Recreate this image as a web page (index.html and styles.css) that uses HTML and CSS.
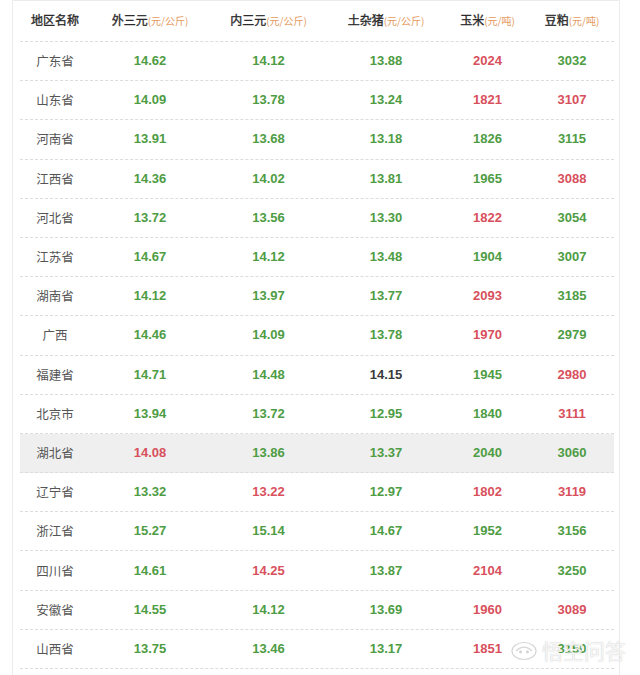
FILE: index.html
```html
<!DOCTYPE html>
<html lang="zh">
<head>
<meta charset="utf-8">
<title>生猪价格</title>
<link rel="stylesheet" href="styles.css">
</head>
<body>
<div class="frame">
  <div class="table">
    <div class="row head">
      <div class="cell">地区名称</div>
      <div class="cell">外三元<span class="unit">(元/公斤)</span></div>
      <div class="cell">内三元<span class="unit">(元/公斤)</span></div>
      <div class="cell">土杂猪<span class="unit">(元/公斤)</span></div>
      <div class="cell">玉米<span class="unit">(元/吨)</span></div>
      <div class="cell">豆粕<span class="unit">(元/吨)</span></div>
    </div>
    <div class="row"><div class="cell name">广东省</div><div class="cell g">14.62</div><div class="cell g">14.12</div><div class="cell g">13.88</div><div class="cell r">2024</div><div class="cell g">3032</div></div>
    <div class="row"><div class="cell name">山东省</div><div class="cell g">14.09</div><div class="cell g">13.78</div><div class="cell g">13.24</div><div class="cell r">1821</div><div class="cell r">3107</div></div>
    <div class="row"><div class="cell name">河南省</div><div class="cell g">13.91</div><div class="cell g">13.68</div><div class="cell g">13.18</div><div class="cell g">1826</div><div class="cell g">3115</div></div>
    <div class="row"><div class="cell name">江西省</div><div class="cell g">14.36</div><div class="cell g">14.02</div><div class="cell g">13.81</div><div class="cell g">1965</div><div class="cell r">3088</div></div>
    <div class="row"><div class="cell name">河北省</div><div class="cell g">13.72</div><div class="cell g">13.56</div><div class="cell g">13.30</div><div class="cell r">1822</div><div class="cell g">3054</div></div>
    <div class="row"><div class="cell name">江苏省</div><div class="cell g">14.67</div><div class="cell g">14.12</div><div class="cell g">13.48</div><div class="cell g">1904</div><div class="cell g">3007</div></div>
    <div class="row"><div class="cell name">湖南省</div><div class="cell g">14.12</div><div class="cell g">13.97</div><div class="cell g">13.77</div><div class="cell r">2093</div><div class="cell g">3185</div></div>
    <div class="row"><div class="cell name">广西</div><div class="cell g">14.46</div><div class="cell g">14.09</div><div class="cell g">13.78</div><div class="cell r">1970</div><div class="cell g">2979</div></div>
    <div class="row"><div class="cell name">福建省</div><div class="cell g">14.71</div><div class="cell g">14.48</div><div class="cell d">14.15</div><div class="cell g">1945</div><div class="cell r">2980</div></div>
    <div class="row"><div class="cell name">北京市</div><div class="cell g">13.94</div><div class="cell g">13.72</div><div class="cell g">12.95</div><div class="cell g">1840</div><div class="cell r">3111</div></div>
    <div class="row hl"><div class="cell name">湖北省</div><div class="cell r">14.08</div><div class="cell g">13.86</div><div class="cell g">13.37</div><div class="cell g">2040</div><div class="cell g">3060</div></div>
    <div class="row"><div class="cell name">辽宁省</div><div class="cell g">13.32</div><div class="cell r">13.22</div><div class="cell g">12.97</div><div class="cell r">1802</div><div class="cell r">3119</div></div>
    <div class="row"><div class="cell name">浙江省</div><div class="cell g">15.27</div><div class="cell g">15.14</div><div class="cell g">14.67</div><div class="cell g">1952</div><div class="cell g">3156</div></div>
    <div class="row"><div class="cell name">四川省</div><div class="cell g">14.61</div><div class="cell r">14.25</div><div class="cell g">13.87</div><div class="cell r">2104</div><div class="cell g">3250</div></div>
    <div class="row"><div class="cell name">安徽省</div><div class="cell g">14.55</div><div class="cell g">14.12</div><div class="cell g">13.69</div><div class="cell r">1960</div><div class="cell r">3089</div></div>
    <div class="row"><div class="cell name">山西省</div><div class="cell g">13.75</div><div class="cell g">13.46</div><div class="cell g">13.17</div><div class="cell r">1851</div><div class="cell g">3150</div></div>
  </div>
  <div class="watermark">
    <svg class="wm-icon" width="28" height="22" viewBox="0 0 28 22">
      <ellipse cx="14" cy="12" rx="12" ry="8.5" fill="rgba(255,255,255,0.85)" stroke="rgba(150,150,150,0.4)" stroke-width="1.2"/>
      <path d="M6 12 Q14 4 22 12" fill="none" stroke="rgba(150,150,150,0.4)" stroke-width="1.2"/>
      <circle cx="10.5" cy="13" r="1.4" fill="rgba(150,150,150,0.45)"/>
      <circle cx="17.5" cy="13" r="1.4" fill="rgba(150,150,150,0.45)"/>
    </svg>
    <span class="wm-text">悟空问答</span>
  </div>
</div>
</body>
</html>
```

FILE: styles.css
```css
html, body {
  margin: 0;
  padding: 0;
  background: #ffffff;
}
body {
  font-family: "Liberation Sans", "Noto Sans CJK SC", sans-serif;
}
.frame {
  position: relative;
  margin-left: 12px;
  width: 608px;
  height: 675px;
  box-sizing: border-box;
  border-left: 1px solid #ececec;
  border-right: 1px solid #ececec;
  border-top: 1px solid #ececec;
  padding: 0 6px 0 7px;
}
.table {
  width: 594px;
}
.row {
  display: grid;
  grid-template-columns: 70px 120px 117px 118px 85px 84px;
  height: 39.2px;
  box-sizing: border-box;
  border-bottom: 1px dashed #dcdcdc;
  align-items: center;
}
.row.head {
  height: 41px;
  padding-bottom: 2px;
}
.row.hl {
  background: #efefef;
}
.cell {
  text-align: center;
  font-size: 13px;
  font-weight: bold;
  line-height: 16px;
  white-space: nowrap;
}
.head .cell {
  font-family: "Noto Sans CJK SC", sans-serif;
  font-size: 12px;
  font-weight: normal;
  color: #2b2b2b;
  -webkit-text-stroke: 0.35px #2b2b2b;
}
.unit {
  font-size: 10px;
  color: #e59a60;
  -webkit-text-stroke: 0;
}
.cell.name {
  font-family: "Noto Sans CJK SC", sans-serif;
  font-size: 12.5px;
  font-weight: normal;
  color: #555555;
}
.g { color: #4e9c44; }
.r { color: #d8505c; }
.d { color: #3a3a3a; }
.watermark {
  position: absolute;
  left: 497px;
  top: 635px;
  display: flex;
  align-items: center;
  gap: 4px;
  white-space: nowrap;
}
.wm-text {
  font-family: "Noto Sans CJK SC", sans-serif;
  font-size: 21px;
  line-height: 28px;
  color: rgba(255, 255, 255, 0.85);
  text-shadow: 0 0 1px rgba(120, 120, 120, 0.5);
}
```
